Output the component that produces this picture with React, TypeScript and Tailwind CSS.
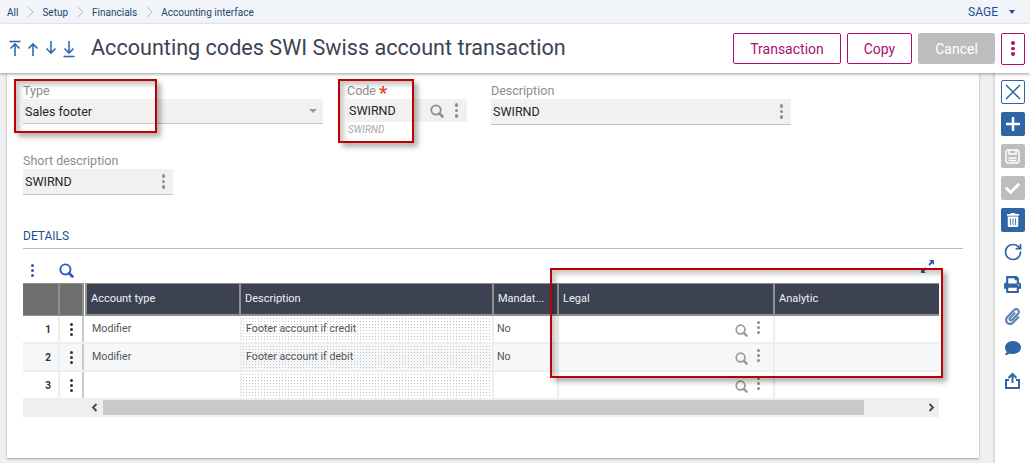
import { FaCheck, FaComment, FaPaperclip, FaPrint, FaTrashAlt } from 'react-icons/fa'
import { RotateCw } from 'lucide-react'

const Dots = ({ className = '' }: { className?: string }) => (
  <span className={`flex flex-col gap-[2px] ${className}`}>
    <i className="size-[3.5px] rounded-full bg-current" />
    <i className="size-[3.5px] rounded-full bg-current" />
    <i className="size-[3.5px] rounded-full bg-current" />
  </span>
)

const Lens = ({ size = 14, className = '' }: { size?: number; className?: string }) => (
  <svg className={className} width={size} height={size} viewBox="0 0 14 14" fill="none" stroke="currentColor">
    <circle cx="6" cy="6" r="4.7" strokeWidth="1.800" />
    <path d="M9.500 9.500 12.500 12.500" strokeWidth="2.600" strokeLinecap="round" />
  </svg>
)

const Chevron = () => (
  <svg className="mx-[8.500px]" width="7" height="12" viewBox="0 0 7 12" fill="none" stroke="#b8bcc2" strokeWidth="1">
    <path d="M1 1l5 5-5 5" />
  </svg>
)

const Arrow = ({ dir, bar }: { dir: 'up' | 'down'; bar?: boolean }) => (
  <svg width="14" height="18" viewBox="0 0 14 18" fill="none" stroke="#2f6aa8" strokeWidth="1.6">
    {dir === 'up' ? (
      <>
        {bar && <path d="M1.5 1.5h11" />}
        <path d="M7 16V4M2.5 8.5 7 4l4.5 4.5" />
      </>
    ) : (
      <>
        <path d="M7 1v12M2.5 8.5 7 13l4.5-4.5" />
        {bar && <path d="M1.5 16.5h11" />}
      </>
    )}
  </svg>
)

const Field = ({ label, value, w }: { label: string; value: string; w: string }) => (
  <div className={w}>
    <div className="h-4 text-[12.5px] leading-4 text-[#8c8c8c]">{label}</div>
    <div className="flex h-[26px] items-center justify-between border-b border-[#c4c4c4] bg-[#f1f1f1] pl-[2px] pr-2 text-[12.5px] text-[#262626]">
      <span className="pt-[1px]">{value}</span>
      <Dots className="text-[#8f8f8f]" />
    </div>
  </div>
)

const RedBox = ({ className }: { className: string }) => (
  <div
    className={`pointer-events-none absolute border-2 border-[#bf0000] shadow-[4px_4px_5px_rgba(0,0,0,0.3),inset_4px_4px_5px_rgba(0,0,0,0.22)] ${className}`}
  />
)

const cols = 'grid grid-cols-[35px_24px_3px_154px_253px_65px_216px_166px]'

const rows = [
  { n: 1, type: 'Modifier', desc: 'Footer account if credit', mand: 'No', bg: 'bg-white' },
  { n: 2, type: 'Modifier', desc: 'Footer account if debit', mand: 'No', bg: 'bg-[#f6f7f9]' },
  { n: 3, type: '', desc: '', mand: '', bg: 'bg-white' },
]

const Head = ({ children }: { children?: string }) => (
  <div className="flex h-[33px] items-center border-b-2 border-l-2 border-t border-[#8d938b] bg-[#3c4252] pl-[4px] text-[11px] text-[#eef0f3]">
    {children}
  </div>
)

const SideBtn = ({ className, children }: { className: string; children: React.ReactNode }) => (
  <div className={`flex size-6 items-center justify-center rounded-[2px] ${className}`}>{children}</div>
)

export default function App() {
  return (
    <div className="relative flex h-[463px] w-[1030px] flex-col overflow-hidden bg-[#f0f0f0] font-['Roboto',sans-serif]">
      <div className="flex h-6 shrink-0 items-center justify-between bg-[#f1f4f9] pl-[7px] pr-[15px] text-[10px] text-[#24466f]">
        <div className="flex items-center">
          <span>All</span>
          <Chevron />
          <span>Setup</span>
          <Chevron />
          <span>Financials</span>
          <Chevron />
          <span>Accounting interface</span>
        </div>
        <div className="flex items-center gap-[11px] text-xs text-[#1f4f8f]">
          SAGE
          <i className="border-x-[3px] border-t-[4px] border-x-transparent border-t-[#1f4f8f]" />
        </div>
      </div>

      <div className="z-10 flex h-[49px] shrink-0 items-center bg-white pl-[8px] pr-[5px] shadow-[0_1px_3px_rgba(0,0,0,0.4)]">
        <div className="flex w-[83px] items-center gap-[4px] pt-[1px]">
          <Arrow dir="up" bar />
          <Arrow dir="up" />
          <Arrow dir="down" />
          <Arrow dir="down" bar />
        </div>
        <h1 className="flex-1 text-[21.600px] text-[#3c4454]">Accounting codes SWI Swiss account transaction</h1>
        <div className="flex items-center gap-[6px] text-sm">
          <button className="h-[31px] w-[108px] rounded-[2px] border border-[#a8106f] text-[#a8106f]">Transaction</button>
          <button className="h-[31px] w-[65px] rounded-[2px] border border-[#a8106f] text-[#a8106f]">Copy</button>
          <button className="h-[31px] w-[77px] rounded-[2px] bg-[#bdbdbd] text-white">Cancel</button>
          <button className="flex h-[32px] w-6 items-center justify-center rounded-[2px] border border-[#a8106f] text-[#a8106f]">
            <Dots />
          </button>
        </div>
      </div>

      <div className="flex flex-1 pl-[7px]">
        <div className="mb-[5px] w-[972px] bg-white pl-4 pt-[10px] shadow-[0_1px_2px_rgba(0,0,0,0.35)]">
          <div className="flex">
            <div className="mr-6 w-[300px]">
              <div className="h-4 text-[12.5px] leading-4 text-[#8c8c8c]">Type</div>
              <div className="flex h-[25px] items-center justify-between border-b border-[#c4c4c4] bg-[#f1f1f1] pl-[2px] pr-[6px] text-[12.5px] text-[#262626]">
                <span className="pt-[2px]">Sales footer</span>
                <i className="border-x-[4px] border-t-[4px] border-x-transparent border-t-[#9a9a9a]" />
              </div>
            </div>
            <div className="mr-6 w-[120px]">
              <div className="flex h-4 text-[12.5px] leading-4 text-[#8c8c8c]">
                Code <span className="ml-[3px] text-lg font-bold leading-5 text-[#e8481c]">*</span>
              </div>
              <div className="flex h-[23px] items-center bg-[#f1f1f1] pl-[2px] text-[12.5px] text-[#262626]">
                <span className="flex-1 pt-[2px]">SWIRND</span>
                <Lens className="mr-[11px] text-[#8f8f8f]" />
                <Dots className="mr-[9px] text-[#8f8f8f]" />
              </div>
              <div className="pl-[1px] pt-[2px] text-[10px] italic leading-3 text-[#a8a8a8]">SWIRND</div>
            </div>
            <Field label="Description" value="SWIRND" w="w-[300px]" />
          </div>

          <div className="mt-[17px]">
            <Field label="Short description" value="SWIRND" w="w-[150px]" />
          </div>

          <div className="mr-[16px] mt-[33px] border-b border-[#aebccc] pb-[3px] text-xs leading-[17px] text-[#1f4f8f]">DETAILS</div>

          <div className="flex h-[34px] w-[916px] items-center pl-[8px] pt-[9px] text-[#2a5bc0]">
            <Dots className="[&>i]:size-[3px]" />
            <Lens size={15} className="ml-[25px]" />
            <svg className="mb-[9px] ml-auto mr-[4px]" width="15" height="15" viewBox="0 0 15 15" fill="#2a5bc0">
              <path d="M9 1h5v5l-1.800-1.800-2.500 2.500-1.400-1.400 2.500-2.500zM6 14H1V9l1.800 1.800 2.500-2.500 1.400 1.400-2.500 2.500z" />
            </svg>
          </div>

          <div className="w-[916px]">
            <div className={cols}>
              <div className="h-[33px] border-y border-[#8d938b] bg-[#6f6f6f]" />
              <div className="h-[33px] border-y border-l-2 border-[#8d938b] bg-[#6f6f6f]" />
              <div className="h-[33px] border-l-2 border-[#8d938b]" />
              <Head>Account type</Head>
              <Head>Description</Head>
              <Head>Mandat...</Head>
              <Head>Legal</Head>
              <Head>Analytic</Head>
            </div>
            {rows.map((r) => (
              <div key={r.n} className={`${cols} h-[28px] border-b-2 border-[#eeeeee] text-[10.700px] text-[#555555] ${r.bg}`}>
                <div className="flex items-center justify-end pr-[7px] text-[10px] font-bold text-[#333333]">{r.n}</div>
                <div className="flex items-center justify-center border-l-2 border-[#eeeeee] text-[#333333]">
                  <Dots className="gap-[1.500px] [&>i]:size-[3px]" />
                </div>
                <div className="border-l-2 border-[#c9c9c9]" />
                <div className="flex items-center pl-[7px]">{r.type}</div>
                <div className="m-[1px] flex items-center border-l-2 border-[#eeeeee] bg-[radial-gradient(#c4c4c4_0.6px,transparent_0.7px)] bg-[length:3px_3px] pl-[4px]">
                  {r.desc}
                </div>
                <div className="flex items-center border-l-2 border-[#eeeeee] pl-[3px]">{r.mand}</div>
                <div className="flex items-center justify-end border-l-2 border-[#eeeeee] pr-[13px]">
                  <Lens size={13} className="mr-[9px] mt-[3px] text-[#9a9a90]" />
                  <Dots className="mb-[4px] gap-[1.500px] text-[#8f8f85] [&>i]:size-[3px]" />
                </div>
                <div className="border-l-2 border-[#eeeeee]" />
              </div>
            ))}
            <div className="flex h-[17px] items-center border-b border-[#eeeeee] bg-[#efefef] pb-[1px] pl-[63px]">
              <svg className="mx-[5px]" width="7" height="9" viewBox="0 0 7 9" fill="none" stroke="#444444" strokeWidth="1.800">
                <path d="M5.500 1 2 4.500 5.500 8" />
              </svg>
              <div className="h-[15px] w-[761px] bg-[#c9c9c9]" />
              <svg className="ml-auto mr-[4px]" width="7" height="9" viewBox="0 0 7 9" fill="none" stroke="#444444" strokeWidth="1.800">
                <path d="M1.500 1 5 4.500 1.500 8" />
              </svg>
            </div>
          </div>
        </div>

        <div className="ml-[15px] flex w-[36px] flex-col items-center gap-2 border-l border-[#dddddd] bg-white pt-[7px] text-[#2f65a5] shadow-[-1px_0_1px_rgba(0,0,0,0.08)]">
          <SideBtn className="border border-[#2f65a5]">
            <svg width="16" height="16" viewBox="0 0 16 16" stroke="#2f65a5" strokeWidth="1.500">
              <path d="M1 1l14 14M15 1 1 15" />
            </svg>
          </SideBtn>
          <SideBtn className="bg-[#2f65a5]">
            <svg width="16" height="16" viewBox="0 0 16 16" stroke="white" strokeWidth="2.500">
              <path d="M8 1v14M1 8h14" />
            </svg>
          </SideBtn>
          <SideBtn className="bg-[#bdbdbd]">
            <svg width="15" height="15" viewBox="0 0 15 15" fill="none" stroke="white" strokeWidth="1.500">
              <path d="M1 2.500 2.500 1h10L14 2.500v10L12.500 14h-10L1 12.500z" />
              <path d="M4 1v4h7V1M3.500 9h8M3.500 11.500h8" />
            </svg>
          </SideBtn>
          <SideBtn className="bg-[#bdbdbd] text-white">
            <FaCheck className="size-[15px]" />
          </SideBtn>
          <SideBtn className="bg-[#2f65a5] text-white">
            <FaTrashAlt className="size-[14px]" />
          </SideBtn>
          <div className="flex size-6 items-center justify-center">
            <RotateCw size={20} strokeWidth={2} />
          </div>
          <div className="flex size-6 items-center justify-center">
            <FaPrint size={17} />
          </div>
          <div className="flex size-6 items-center justify-center">
            <FaPaperclip size={17} className="opacity-80" />
          </div>
          <div className="flex size-6 items-center justify-center">
            <FaComment size={16} />
          </div>
          <div className="flex size-6 items-center justify-center">
            <svg width="15" height="17" viewBox="0 0 15 17" fill="none" stroke="#2f65a5" strokeWidth="2">
              <path d="M7.500 11V2M3.500 6l4-4 4 4" />
              <path d="M4 8H1v8h13V8h-3" />
            </svg>
          </div>
        </div>
      </div>

      <RedBox className="left-[14px] top-[79px] h-[54px] w-[143px]" />
      <RedBox className="left-[338px] top-[79px] h-[64px] w-[76px]" />
      <RedBox className="left-[550px] top-[268px] h-[110px] w-[393px]" />
    </div>
  )
}
